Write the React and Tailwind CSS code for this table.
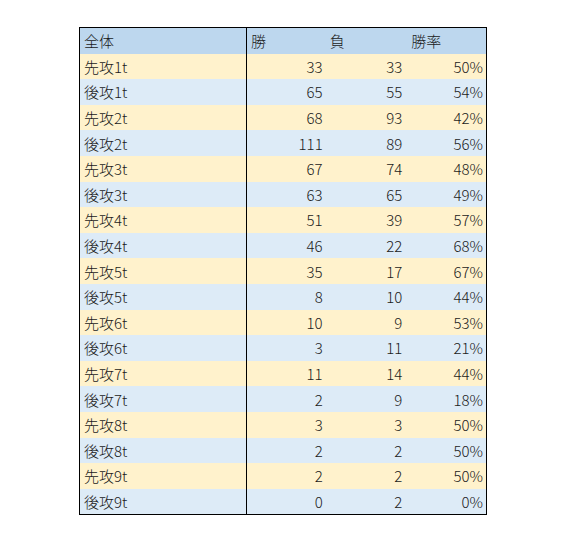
const rows = [
  ["先攻1t", 33, 33, "50%"],
  ["後攻1t", 65, 55, "54%"],
  ["先攻2t", 68, 93, "42%"],
  ["後攻2t", 111, 89, "56%"],
  ["先攻3t", 67, 74, "48%"],
  ["後攻3t", 63, 65, "49%"],
  ["先攻4t", 51, 39, "57%"],
  ["後攻4t", 46, 22, "68%"],
  ["先攻5t", 35, 17, "67%"],
  ["後攻5t", 8, 10, "44%"],
  ["先攻6t", 10, 9, "53%"],
  ["後攻6t", 3, 11, "21%"],
  ["先攻7t", 11, 14, "44%"],
  ["後攻7t", 2, 9, "18%"],
  ["先攻8t", 3, 3, "50%"],
  ["後攻8t", 2, 2, "50%"],
  ["先攻9t", 2, 2, "50%"],
  ["後攻9t", 0, 2, "0%"],
];

export default function App() {
  return (
    <div className="w-[567px] h-[544px] bg-white pt-[27px] pl-[79px]" style={{ fontFamily: '"Noto Sans CJK JP", "Noto Sans", sans-serif' }}>
      <div className="w-[408px] border border-black text-[15px] font-light text-[#1a1a1a] leading-none">
        <div className="grid grid-cols-[167px_1fr_1fr_1fr] h-[25.6px] bg-[#bdd7ee]">
          <div className="border-r border-black pl-[4px] flex items-center">全体</div>
          <div className="pl-[4px] flex items-center">勝</div>
          <div className="pl-[3px] flex items-center">負</div>
          <div className="pl-[5px] flex items-center">勝率</div>
        </div>
        {rows.map((r, i) => (
          <div
            key={i}
            className={`grid grid-cols-[167px_1fr_1fr_1fr] h-[25.6px] ${i % 2 === 0 ? "bg-[#fff2cc]" : "bg-[#ddebf7]"}`}
          >
            <div className="border-r border-black pl-[4px] flex items-center">{r[0]}</div>
            <div className="pr-[4px] flex items-center justify-end">{r[1]}</div>
            <div className="pr-[4px] flex items-center justify-end">{r[2]}</div>
            <div className="pr-[3px] flex items-center justify-end">{r[3]}</div>
          </div>
        ))}
      </div>
    </div>
  );
}
